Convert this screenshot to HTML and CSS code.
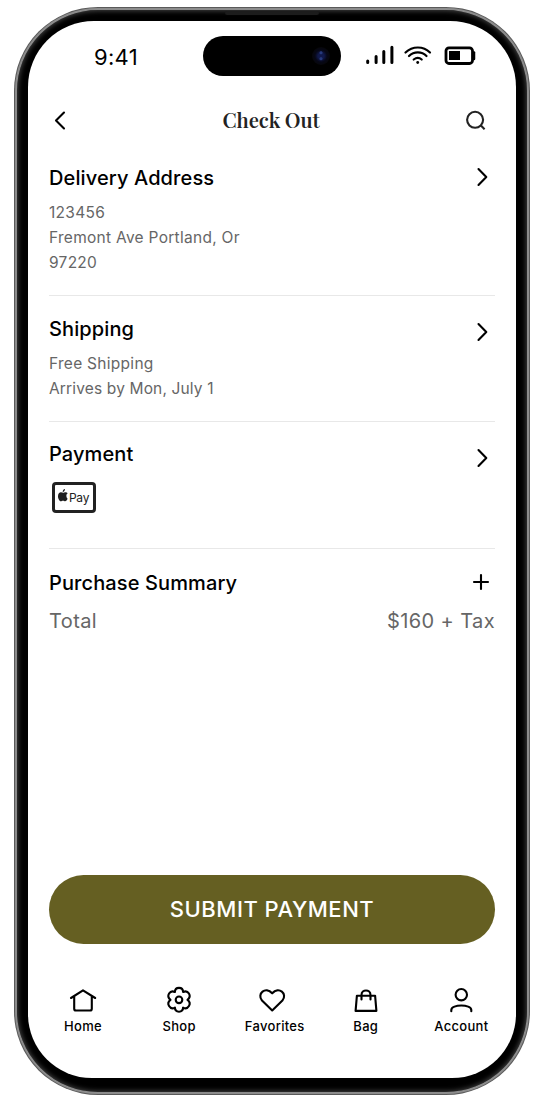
FILE: index.html
```html
<!DOCTYPE html>
<html lang="en">
<head>
<meta charset="utf-8">
<title>Check Out</title>
<link rel="stylesheet" href="styles.css">
</head>
<body>
<div class="phone">
  <div class="bezel">
  <i class="speaker"></i>
  <main class="screen">
    <div class="status">
      <span class="time">9:41</span>
      <div class="island"><i class="lens"></i></div>
      <svg class="indicators" width="111" height="22" viewBox="365 44 111 22" fill="none" stroke="#000" stroke-linecap="round">
        <path d="M367.700 61v1.500M376.100 56.500v6M383.800 51.500v11M391.900 47.200v15.300" stroke-width="3"/>
        <path d="M405.500 52.500c7-6.700 17.800-6.700 24.500 0M409 56c5-4.800 12.700-4.800 17.500 0M413.700 59.500c2.700-2.200 5.500-2.200 8 0" stroke-width="2.200"/>
        <circle cx="417.700" cy="62.500" r="1.400" fill="#000" stroke="none"/>
        <rect x="446" y="47.800" width="26.500" height="15.700" rx="3" stroke-width="2.800"/>
        <path d="M474 52.500v6.500" stroke-width="2.500"/>
        <rect x="449" y="51" width="11" height="9" fill="#000" stroke="none"/>
      </svg>
    </div>
    <header class="bar">
      <svg width="20" height="24" viewBox="50 108 20 24" class="line"><path d="M64 112.500 L56 120.500 L64 128.500"/></svg>
      <h1>Check Out</h1>
      <svg width="24" height="24" viewBox="464 108 24 24" class="line ink"><circle cx="475.100" cy="119.800" r="8"/><path d="M480.900 125.500l3.700 3.700" stroke-linecap="butt"/></svg>
    </header>
    <section class="row address">
      <div><h2>Delivery Address</h2><p>123456</p><p>Fremont Ave Portland, Or</p><p>97220</p></div>
      <svg class="line chev" width="12" height="20" viewBox="0 0 12 20"><path d="M2.500 2 L10.300 10 L2.500 18"/></svg>
    </section>
    <section class="row shipping">
      <div><h2>Shipping</h2><p>Free Shipping</p><p class="arrival">Arrives by Mon, July 1</p></div>
      <svg class="line chev low" width="12" height="20" viewBox="0 0 12 20"><path d="M2.500 2 L10.300 10 L2.500 18"/></svg>
    </section>
    <section class="row payment">
      <div><h2>Payment</h2>
        <div class="pay">
          <svg width="10" height="13" viewBox="0 0 10 13" fill="#1f1f1f"><path d="M7 0C5.500.2 4.600 1.500 4.700 3 6.200 2.900 7 1.500 7 0ZM9.600 9.800C9 11 8.200 12.200 7.100 12.200c-.8 0-1.100-.5-2.100-.5s-1.300.5-2.100.5C1.300 12.200 0 9.500 0 7.200 0 4.800 1.400 3.300 3 3.300c.9 0 1.500.5 2.200.5.700 0 1.300-.6 2.400-.6.800 0 1.600.4 2.100 1.100C7.800 5.400 8 8.300 9.600 9.800Z"/></svg>
          <span>Pay</span>
        </div>
      </div>
      <svg class="line chev low" width="12" height="20" viewBox="0 0 12 20"><path d="M2.500 2 L10.300 10 L2.500 18"/></svg>
    </section>
    <section class="summary">
      <div class="pair"><h2>Purchase Summary</h2><svg class="line plus" width="18" height="18" viewBox="0 0 18 18"><path d="M9 2v14M2 9h14"/></svg></div>
      <div class="pair total"><span>Total</span><span class="price">$160 + Tax</span></div>
    </section>
    <button class="submit">SUBMIT PAYMENT</button>
    <nav class="tabs">
      <a class="tab home"><svg class="line" width="28" height="28" viewBox="69 986 28 28"><path d="M71 998 83 990.300 95.200 998M74.200 996.500v12.200q0 1.800 1.800 1.800h14q1.800 0 1.800-1.800V996.500"/></svg><span>Home</span></a>
      <a class="tab shop"><svg class="line" width="28" height="28" viewBox="165 986 28 28"><path d="M174.900 992C175 986.500 183 986.500 183.100 992C188 989.400 192.300 996.200 187.500 999.800C192.300 1003.400 188 1010.200 183.100 1007.600C183 1013.100 175 1013.100 174.900 1007.600C170 1010.200 165.700 1003.400 170.500 999.800C165.700 996.200 170 989.400 174.900 992Z"/><circle cx="179" cy="999.800" r="3.300"/></svg><span>Shop</span></a>
      <a class="tab favorites"><svg class="line" width="28" height="28" viewBox="258 986 28 28"><path d="M272.200 1010.500 262 1000.500C256.500 993.800 265.500 986 272.200 993.300C278.900 986 287.900 993.800 282.400 1000.500Z"/></svg><span>Favorites</span></a>
      <a class="tab bag"><svg class="line" width="28" height="28" viewBox="352 986 28 28"><path d="M356.900 995.700h18.200l1.300 15.200h-20.800ZM361.500 999.500V995c0-6 9-6 9 0v4.500"/></svg><span>Bag</span></a>
      <a class="tab account"><svg class="line" width="28" height="28" viewBox="447 986 28 28"><circle cx="461.300" cy="994.700" r="5.700"/><path d="M451.300 1011.200V1010C451.300 1004 471.300 1004 471.300 1010V1011.200"/></svg><span>Account</span></a>
    </nav>
  </main>
  </div>
</div>
</body>
</html>
```
FILE: styles.css
```css
* { box-sizing: border-box; }
body { margin: 0; padding: 7px 0 0 14px; background: #fff; font-family: Inter, sans-serif; color: #000; height: 1106px; overflow: hidden; }
h1, h2, p { margin: 0; }
.phone { width: 516px; height: 1088px; border-radius: 84px; background: #5a5a5a; padding: 1px; }
.bezel { position: relative; width: 514px; height: 1086px; border: 2px solid #8c8c8c; border-radius: 83px; background: #000; padding: 11px 11px 14px; box-shadow: inset 0 0 5px 1px #444; }
/* earpiece slit in the top edge of the frame */
.speaker { position: absolute; top: 1px; left: 208px; width: 94px; height: 4px; border-radius: 2px; background: #1c1c1c; }
.screen { width: 488px; height: 1057px; background: #fff; border-radius: 66px 66px 64px 64px; padding: 0 21px; display: flex; flex-direction: column; }
.line { fill: none; stroke: #000; stroke-width: 2.100; stroke-linecap: round; stroke-linejoin: round; flex: none; display: block; }
.ink { stroke: #222; }
.status { display: flex; height: 72px; padding: 15px 20px 0 45px; align-items: flex-start; }
.time { font-size: 22px; line-height: 42px; width: 108.500px; flex: none; letter-spacing: .3px; }
.island { flex: none; width: 138.500px; height: 40px; border-radius: 20px; background: #000; padding: 11px; display: flex; justify-content: flex-end; }
.lens { width: 18px; height: 18px; border-radius: 50%; background: radial-gradient(circle at 50% 32%, #26397c 0 1px, transparent 2px), radial-gradient(circle at 50% 65%, #26397c 0 1px, transparent 2px), radial-gradient(circle, #10184a 0 3px, #060716 6px, #07070b 9px); }
.indicators { margin: 8px 0 0 24px; flex: none; }
.bar { height: 60px; display: flex; justify-content: space-between; padding: 15px 7px 0 1px; }
h1 { font: 600 20.300px/24px "Playfair Display", "Liberation Serif", serif; color: #222; margin: 0 0 0 8px; letter-spacing: -.1px; }
.row { display: flex; justify-content: space-between; border-bottom: 1.500px solid #e8e8e8; flex: none; }
.address { height: 143px; padding-top: 12px; }
.shipping { height: 126px; padding-top: 20px; }
.payment { height: 127px; padding-top: 19px; }
.chev { margin: 2px 7px 0 0; }
.low { margin-top: 7px; }
.shipping .low { margin-top: 6px; }
h2 { font-size: 20px; font-weight: 450; line-height: 26px; letter-spacing: .11px; }
p { font-size: 15.500px; font-weight: 430; line-height: 24.800px; color: #666; letter-spacing: .28px; }
h2 + p { margin-top: 10px; }
.arrival { letter-spacing: .15px; }
.pay { margin: 14.500px 0 0 3px; width: 44px; height: 31px; border: 3px solid #222; border-radius: 4px; display: flex; align-items: center; padding-left: 3px; gap: 1px; }
.pay svg { margin-top: -3px; }
.pay span { font-size: 12px; letter-spacing: -.3px; font-weight: 400; color: #222; }
.summary { padding-top: 21px; height: 326px; flex: none; }
.pair { display: flex; justify-content: space-between; }
.plus { margin: 3px 5px 0 0; }
.total { font-size: 20px; font-weight: 430; line-height: 26px; color: #666; letter-spacing: .4px; margin-top: 12px; }
.submit { flex: none; height: 69px; border: 0; border-radius: 35px; background: #655f22; color: #fff; font: 550 22px Inter, sans-serif; letter-spacing: .5px; padding: 0 0 2px; }
.tabs { display: grid; grid-template-columns: repeat(5, 94.600px); margin: 42px -14px 0 -13.300px; }
.tab { display: flex; flex-direction: column; align-items: center; font-size: 13px; font-weight: 460; line-height: 16px; gap: 3.500px; letter-spacing: .3px; }
.shop { padding-left: 3px; }
.favorites span { margin-left: 5px; }
.bag { padding-right: 2px; }
```
